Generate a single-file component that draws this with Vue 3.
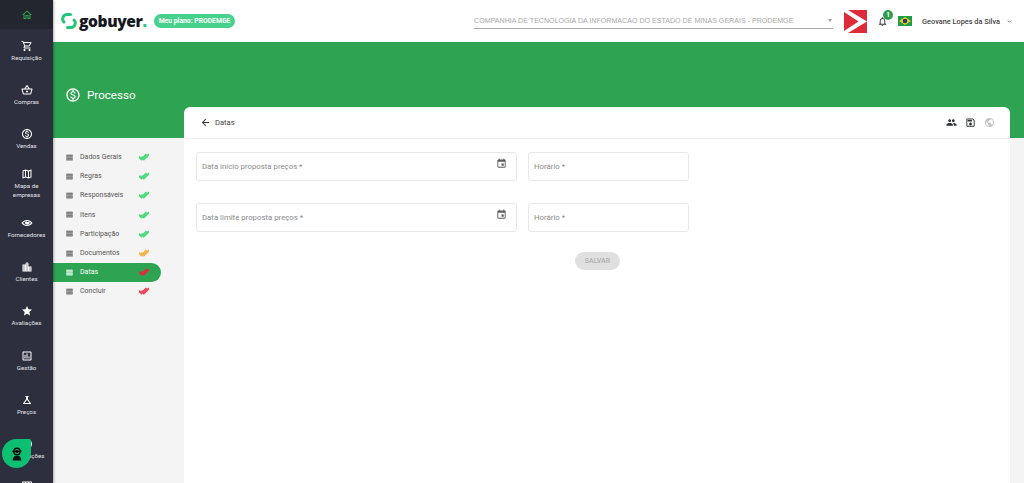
<template>
  <div class="app">
    <!-- sidebar -->
    <aside class="side">
      <div class="side-home">
        <svg class="side-icon home-icon" viewBox="0 0 24 24"><path :d="icons.home" /></svg>
      </div>
      <a v-for="item in menu" :key="item.label" class="side-item">
        <svg class="side-icon" viewBox="0 0 24 24"><path :d="icons[item.icon]" /></svg>
        <span class="side-label">{{ item.label }}</span>
      </a>
      <!-- próximo item, cortado pela janela -->
      <a class="side-item side-item-cut">
        <svg class="side-icon" viewBox="0 0 24 24"><path :d="icons.table" /></svg>
      </a>
    </aside>

    <div class="main">
      <!-- topo -->
      <header class="top">
        <div class="brand">
          <svg class="brand-mark" viewBox="0 0 18 18">
            <path d="M10.5 2.6 H7 A4.3 4.3 0 0 0 4 10" />
            <path d="M7.5 15.4 H11 A4.3 4.3 0 0 0 14 8" />
          </svg>
          <span class="brand-name">gobuyer<i>.</i></span>
        </div>
        <span class="plan">Meu plano: PRODEMGE</span>

        <div class="company">
          <span>COMPANHIA DE TECNOLOGIA DA INFORMACAO DO ESTADO DE MINAS GERAIS - PRODEMGE</span>
          <i class="caret"></i>
        </div>
        <svg class="company-logo" viewBox="0 0 23 23">
          <rect width="23" height="23" fill="#dd2b39" />
          <path d="M0 0 H4 L23 11.5 L4 23 H0 V21 L14.5 11.5 L0 2 Z" fill="#fff" />
        </svg>
        <div class="bell">
          <svg viewBox="0 0 24 24"><path :d="icons.bell" /></svg>
          <span class="badge">1</span>
        </div>
        <svg class="flag" viewBox="0 0 14 10">
          <rect width="14" height="10" fill="#1d9c4a" />
          <path d="M7 1 L12.8 5 L7 9 L1.2 5 Z" fill="#f4d21f" />
          <circle cx="7" cy="5" r="2.3" fill="#27397f" />
        </svg>
        <span class="user">Geovane Lopes da Silva</span>
        <svg class="chev" viewBox="0 0 10 6"><path d="M1.5 1 L5 4.5 L8.5 1" /></svg>
      </header>

      <!-- faixa verde -->
      <section class="hero">
        <svg class="hero-icon" viewBox="0 0 24 24"><path :d="icons.money" /></svg>
        <h1>Processo</h1>
      </section>

      <div class="content">
        <!-- etapas -->
        <nav class="steps">
          <a v-for="s in steps" :key="s.label" class="step" :class="{ active: s.active }">
            <svg class="step-bullet" viewBox="0 0 24 24"><path :d="icons.lines" /></svg>
            <span class="step-label">{{ s.label }}</span>
            <svg class="step-check" viewBox="0 0 24 24"><path :d="icons.doneAll" :fill="s.color" :stroke="s.color" /></svg>
          </a>
        </nav>

        <!-- formulário -->
        <main class="card">
          <div class="card-head">
            <svg class="back" viewBox="0 0 24 24"><path :d="icons.back" /></svg>
            <span class="card-title">Datas</span>
            <div class="card-tools">
              <svg viewBox="0 0 24 24"><path :d="icons.people" /></svg>
              <svg viewBox="0 0 24 24"><path :d="icons.save" /></svg>
              <svg class="muted" viewBox="0 0 24 24"><path :d="icons.globe" /></svg>
            </div>
          </div>

          <form class="form" @submit.prevent>
            <div v-for="row in rows" :key="row" class="form-row">
              <label class="field field-date">
                <span>{{ row }}</span>
                <svg viewBox="0 0 24 24"><path :d="icons.event" /></svg>
              </label>
              <label class="field field-time"><span>Horário *</span></label>
            </div>
            <div class="form-actions">
              <button type="button" class="save-btn">SALVAR</button>
            </div>
          </form>
        </main>
      </div>
    </div>

    <!-- botão de suporte -->
    <button class="fab">
      <svg viewBox="0 0 16 16">
        <circle cx="8" cy="5.5" r="3.2" fill="none" stroke="#111" stroke-width="1.4" />
        <circle cx="8" cy="5.5" r="1.6" fill="#111" />
        <rect x="3.4" y="4.6" width="9.2" height="1.6" rx="0.6" fill="#111" />
        <path d="M3.6 14.4 C3.8 11 5.8 9.8 8 9.8 C10.2 9.8 12.2 11 12.4 14.4 Z" fill="#111" />
      </svg>
    </button>
  </div>
</template>

<script setup>
const icons = {
  home: 'M12 5.69l5 4.5V18h-2v-6H9v6H7v-7.81l5-4.5M12 3L2 12h3v8h6v-6h2v6h6v-8h3L12 3z',
  cart: 'M15.55 13c.75 0 1.41-.41 1.75-1.03l3.58-6.49c.37-.66-.11-1.48-.87-1.48H5.21l-.94-2H1v2h2l3.6 7.59-1.35 2.44C4.52 15.37 5.48 17 7 17h12v-2H7l1.1-2h7.45zM6.16 6h12.15l-2.76 5H8.53L6.16 6zM7 18c-1.1 0-1.99.9-1.99 2S5.9 22 7 22s2-.9 2-2-.9-2-2-2zm10 0c-1.1 0-1.99.9-1.99 2s.89 2 1.99 2 2-.9 2-2-.9-2-2-2z',
  basket: 'M22 9h-4.79l-4.38-6.56c-.19-.28-.51-.42-.83-.42s-.64.14-.83.43L6.79 9H2c-.55 0-1 .45-1 1 0 .09.01.18.04.27l2.54 9.27c.23.84 1 1.46 1.92 1.46h13c.92 0 1.69-.62 1.93-1.46l2.54-9.27L23 10c0-.55-.45-1-1-1zM12 4.8L14.8 9H9.2L12 4.8zM18.5 19l-12.99.01L3.31 11H20.7l-2.2 8zM12 13c-1.1 0-2 .9-2 2s.9 2 2 2 2-.9 2-2-.9-2-2-2z',
  money: 'M12 2C6.48 2 2 6.48 2 12s4.48 10 10 10 10-4.48 10-10S17.52 2 12 2zm0 18c-4.41 0-8-3.59-8-8s3.59-8 8-8 8 3.59 8 8-3.59 8-8 8zm.31-8.86c-1.77-.45-2.34-.94-2.34-1.67 0-.84.79-1.43 2.1-1.43 1.38 0 1.9.66 1.94 1.64h1.71c-.05-1.34-.87-2.57-2.49-2.97V5H10.9v1.69c-1.51.32-2.72 1.3-2.72 2.81 0 1.79 1.49 2.69 3.66 3.21 1.95.46 2.34 1.15 2.34 1.87 0 .53-.39 1.39-2.1 1.39-1.6 0-2.23-.72-2.32-1.64H8.04c.1 1.7 1.36 2.66 2.86 2.97V19h2.34v-1.67c1.52-.29 2.72-1.16 2.73-2.77-.01-2.2-1.9-2.96-3.66-3.42z',
  map: 'M20.5 3l-.16.03L15 5.1 9 3 3.36 4.9c-.21.07-.36.25-.36.48V20.5c0 .28.22.5.5.5l.16-.03L9 18.9l6 2.1 5.64-1.9c.21-.07.36-.25.36-.48V3.5c0-.28-.22-.5-.5-.5zM10 5.47l4 1.4v11.66l-4-1.4V5.47zm-5 .99l3-1.01v11.7l-3 1.16V6.46zm14 11.08l-3 1.01V6.86l3-1.16v11.84z',
  handshake: 'M12 6C7.5 6 3.4 8.2 1 12c2.4 3.8 6.5 6 11 6s8.6-2.2 11-6c-2.4-3.8-6.5-6-11-6zm0 10c-3.1 0-6-1.5-8-4 2-2.5 4.9-4 8-4s6 1.5 8 4c-2 2.5-4.9 4-8 4zM8 10.5l3-1.5 2 1 3-.5 2 2.5-4.5 3.5-3-1-3-2z',
  city: 'M15 11V5l-3-3-3 3v2H3v14h18V11h-6zm-8 8H5v-2h2v2zm0-4H5v-2h2v2zm0-4H5V9h2v2zm6 8h-2v-2h2v2zm0-4h-2v-2h2v2zm0-4h-2V9h2v2zm0-4h-2V5h2v2zm6 12h-2v-2h2v2zm0-4h-2v-2h2v2z',
  star: 'M12 17.27L18.18 21l-1.64-7.03L22 9.24l-7.19-.61L12 2 9.19 8.63 2 9.24l5.46 4.73L5.82 21z',
  chart: 'M19 3H5c-1.1 0-2 .9-2 2v14c0 1.1.9 2 2 2h14c1.1 0 2-.9 2-2V5c0-1.1-.9-2-2-2zm0 16H5V5h14v14zM7 10h2v7H7zm4-3h2v10h-2zm4 6h2v4h-2z',
  flask: 'M19.8 18.4L14 10.67V6.5l1.35-1.69c.26-.33.03-.81-.39-.81H9.04c-.42 0-.65.48-.39.81L10 6.5v4.17L4.2 18.4c-.49.66-.02 1.6.8 1.6h14c.82 0 1.29-.94.8-1.6zM12 7.5l0 0 0 0zM7 18l5-6.5 5 6.5H7z',
  table: 'M20 3H4c-1.1 0-2 .9-2 2v14c0 1.1.9 2 2 2h16c1.1 0 2-.9 2-2V5c0-1.1-.9-2-2-2zM10 5h4v4h-4V5zM4 5h4v4H4V5zm16 4h-4V5h4v4z',
  bell: 'M12 22c1.1 0 2-.9 2-2h-4c0 1.1.9 2 2 2zm6-6v-5c0-3.07-1.63-5.64-4.5-6.32V4c0-.83-.67-1.5-1.5-1.5s-1.5.67-1.5 1.5v.68C7.64 5.36 6 7.92 6 11v5l-2 2v1h16v-1l-2-2zm-2 1H8v-6c0-2.48 1.51-4.5 4-4.5s4 2.02 4 4.5v6z',
  lines: 'M4 15h16v-2H4v2zm0 4h16v-2H4v2zm0-8h16V9H4v2zm0-6v2h16V5H4z',
  doneAll: 'M18 7l-1.41-1.41-6.34 6.34 1.41 1.41L18 7zm4.24-1.41L11.66 16.17 7.48 12l-1.41 1.41L11.66 19l12-12-1.42-1.41zM.41 13.41L6 19l1.41-1.41L1.83 12 .41 13.41z',
  back: 'M20 11H7.83l5.59-5.59L12 4l-8 8 8 8 1.41-1.41L7.83 13H20v-2z',
  people: 'M16 11c1.66 0 2.99-1.34 2.99-3S17.66 5 16 5c-1.66 0-3 1.34-3 3s1.34 3 3 3zm-8 0c1.66 0 2.99-1.34 2.99-3S9.66 5 8 5C6.34 5 5 6.34 5 8s1.34 3 3 3zm0 2c-2.33 0-7 1.17-7 3.5V19h14v-2.5c0-2.33-4.67-3.5-7-3.5zm8 0c-.29 0-.62.02-.97.05 1.16.84 1.97 1.97 1.97 3.45V19h6v-2.5c0-2.33-4.67-3.5-7-3.5z',
  save: 'M17 3H5c-1.11 0-2 .9-2 2v14c0 1.1.89 2 2 2h14c1.1 0 2-.9 2-2V7l-4-4zm2 16H5V5h11.17L19 7.83V19zm-7-7c-1.66 0-3 1.34-3 3s1.34 3 3 3 3-1.34 3-3-1.34-3-3-3zM6 6h9v4H6z',
  globe: 'M12 2C6.48 2 2 6.48 2 12s4.48 10 10 10 10-4.48 10-10S17.52 2 12 2zm-1 17.93c-3.95-.49-7-3.85-7-7.93 0-.62.08-1.21.21-1.79L9 15v1c0 1.1.9 2 2 2v1.93zm6.9-2.54c-.26-.81-1-1.39-1.9-1.39h-1v-3c0-.55-.45-1-1-1H8v-2h2c.55 0 1-.45 1-1V7h2c1.1 0 2-.9 2-2v-.41c2.93 1.19 5 4.06 5 7.41 0 2.08-.8 3.97-2.1 5.39z',
  event: 'M17 12h-5v5h5v-5zM16 1v2H8V1H6v2H5c-1.11 0-1.99.9-1.99 2L3 19c0 1.1.89 2 2 2h14c1.1 0 2-.9 2-2V5c0-1.1-.9-2-2-2h-1V1h-2zm3 18H5V8h14v11z',
}

const menu = [
  { label: 'Requisição', icon: 'cart' },
  { label: 'Compras', icon: 'basket' },
  { label: 'Vendas', icon: 'money' },
  { label: 'Mapa de empresas', icon: 'map' },
  { label: 'Fornecedores', icon: 'handshake' },
  { label: 'Clientes', icon: 'city' },
  { label: 'Avaliações', icon: 'star' },
  { label: 'Gestão', icon: 'chart' },
  { label: 'Preços', icon: 'flask' },
  { label: 'Negociações', icon: 'money' },
]

const green = '#4fdc7c'
const steps = [
  { label: 'Dados Gerais', color: green },
  { label: 'Regras', color: green },
  { label: 'Responsáveis', color: green },
  { label: 'Itens', color: green },
  { label: 'Participação', color: green },
  { label: 'Documentos', color: '#f3b54a' },
  { label: 'Datas', color: '#d9303c', active: true },
  { label: 'Concluir', color: '#f4465a' },
]

const rows = ['Data início proposta preços *', 'Data limite proposta preços *']
</script>

<style>
html, body {
  margin: 0;
  height: 100%;
  overflow: hidden;
  background: #f4f4f4;
}
</style>

<style scoped>
.app {
  display: flex;
  height: 100vh;
  overflow: hidden;
  font-family: Roboto, "Liberation Sans", sans-serif;
  position: relative;
}

/* ── sidebar ── */
.side {
  width: 53px;
  flex-shrink: 0;
  background: #2d2f3e;
  box-shadow: 1px 0 2px rgba(0, 0, 0, 0.3);
  display: flex;
  flex-direction: column;
  overflow: hidden;
  z-index: 2;
}
.side-home {
  height: 29px;
  flex-shrink: 0;
  background: #23252f;
  display: flex;
  align-items: center;
  justify-content: center;
}
.side-item {
  height: 44.3px;
  flex-shrink: 0;
  display: flex;
  flex-direction: column;
  align-items: center;
  justify-content: center;
  gap: 2px;
}
.side-item-cut {
  justify-content: flex-start;
  padding-top: 8px;
  box-sizing: border-box;
}
.side-icon {
  width: 12px;
  height: 12px;
  fill: #fff;
}
.home-icon {
  fill: #2fa651;
}
.side-label {
  font-size: 6.2px;
  line-height: 9px;
  font-weight: 400;
  color: #e2e3e8;
  text-align: center;
  max-width: 44px;
}

/* ── topo ── */
.main {
  flex: 1;
  min-width: 0;
  display: flex;
  flex-direction: column;
}
.top {
  height: 42px;
  flex-shrink: 0;
  background: #fff;
  display: flex;
  align-items: center;
  padding: 0 12px 0 7px;
}
.brand {
  display: flex;
  align-items: center;
  gap: 1px;
}
.brand-mark {
  width: 18px;
  height: 18px;
  fill: none;
  stroke: #21c77a;
  stroke-width: 3;
  stroke-linecap: round;
}
.brand-name {
  font-family: "Open Sans", sans-serif;
  font-size: 15.6px;
  font-weight: 800;
  letter-spacing: -0.4px;
  color: #16181d;
}
.brand-name i {
  font-style: normal;
  color: #21c77a;
}
.plan {
  margin-left: 7px;
  height: 14px;
  padding: 0 5px;
  border-radius: 7px;
  background: #46d18c;
  color: #fff;
  font-size: 6.8px;
  font-weight: 700;
  line-height: 14px;
  white-space: nowrap;
}
.company {
  margin-left: auto;
  margin-bottom: 4px;
  width: 359px;
  height: 20px;
  box-sizing: border-box;
  padding: 4px 1px 0 0;
  border-bottom: 1px solid #a9a9a9;
  display: flex;
  align-items: center;
  justify-content: space-between;
  font-family: "Liberation Sans", sans-serif;
  font-size: 7.1px;
  color: #a8a8a8;
  white-space: nowrap;
}
.caret {
  width: 0;
  height: 0;
  border-left: 2.5px solid transparent;
  border-right: 2.5px solid transparent;
  border-top: 3px solid #999;
}
.company-logo {
  width: 23px;
  height: 23px;
  margin-left: 11px;
  flex-shrink: 0;
}
.bell {
  position: relative;
  width: 11px;
  height: 11px;
  margin-left: 10px;
}
.bell svg {
  width: 11px;
  height: 11px;
  fill: #333;
  display: block;
}
.badge {
  position: absolute;
  top: -6px;
  left: 6px;
  width: 10px;
  height: 10px;
  border-radius: 50%;
  background: #2e9d4f;
  color: #fff;
  font-size: 6.5px;
  font-weight: 700;
  line-height: 10px;
  text-align: center;
}
.flag {
  width: 14px;
  height: 10px;
  margin-left: 10px;
  flex-shrink: 0;
}
.user {
  margin-left: 10px;
  font-size: 7.35px;
  font-weight: 500;
  color: #444;
  white-space: nowrap;
}
.chev {
  width: 5px;
  height: 3px;
  margin-left: 7px;
  fill: none;
  stroke: #555;
  stroke-width: 1.4;
}

/* ── faixa verde ── */
.hero {
  height: 96px;
  flex-shrink: 0;
  background: #2ea452;
  display: flex;
  align-items: center;
  padding: 10px 0 0 12px;
  box-sizing: border-box;
  color: #fff;
}
.hero-icon {
  width: 16px;
  height: 16px;
  fill: #fff;
}
.hero h1 {
  margin: 0 0 0 6px;
  font-size: 11.6px;
  font-weight: 400;
  line-height: 16px;
}

/* ── conteúdo ── */
.content {
  flex: 1;
  min-height: 0;
  display: flex;
  background: #f4f4f4;
  padding-right: 14px;
}
.steps {
  width: 131px;
  flex-shrink: 0;
  padding-top: 9.5px;
  display: flex;
  flex-direction: column;
  box-sizing: border-box;
}
.step {
  width: 108px;
  height: 19.2px;
  flex-shrink: 0;
  display: flex;
  align-items: center;
  box-sizing: border-box;
  padding-left: 11.5px;
  border-radius: 0 10px 10px 0;
  color: #555;
  font-size: 7px;
}
.step.active {
  background: #2ea452;
  color: #fff;
}
.step-bullet {
  width: 9px;
  height: 9px;
  fill: #777;
  stroke: #777;
  stroke-width: 1.6;
}
.step.active .step-bullet {
  fill: #d8efdf;
  stroke: #d8efdf;
}
.step-label {
  margin-left: 6.5px;
  width: 59px;
  white-space: nowrap;
}
.step-check {
  width: 10px;
  height: 10px;
  stroke-width: 3;
}

.card {
  flex: 1;
  min-width: 0;
  margin-top: -31px;
  background: #fff;
  border-radius: 6px 6px 0 0;
  position: relative;
}
.card-head {
  height: 32px;
  box-sizing: border-box;
  border-bottom: 1px solid #eee;
  display: flex;
  align-items: center;
  padding: 0 15px 0 16px;
}
.back {
  width: 11px;
  height: 11px;
  fill: #333;
}
.card-title {
  margin-left: 4px;
  font-size: 7.6px;
  color: #444;
}
.card-tools {
  margin-left: auto;
  display: flex;
  gap: 8px;
}
.card-tools svg {
  width: 11px;
  height: 11px;
  fill: #2e3038;
}
.card-tools svg.muted {
  fill: #c4c4c4;
}
.form {
  padding: 13px 11px 0 12px;
}
.form-row {
  display: flex;
  gap: 11px;
  margin-bottom: 22px;
}
.field {
  height: 29px;
  box-sizing: border-box;
  border: 1px solid #e8e8e8;
  border-radius: 3px;
  display: flex;
  align-items: center;
  justify-content: space-between;
  padding: 0 5px;
  font-size: 7.8px;
  color: #8a8a8a;
}
.field-date {
  width: 321px;
}
.field-date svg {
  width: 11px;
  height: 11px;
  fill: #5d5d5d;
  align-self: flex-start;
  margin: 5px 4px 0 0;
}
.field-time {
  width: 161px;
}
.form-actions {
  display: flex;
  justify-content: center;
  margin-top: -2px;
}
.save-btn {
  width: 45px;
  height: 18px;
  border: 0;
  border-radius: 9px;
  padding: 0;
  background: #e0e0e0;
  color: #adadad;
  font-family: inherit;
  font-size: 7px;
  font-weight: 500;
}

/* ── botão flutuante ── */
.fab {
  position: absolute;
  left: 2px;
  top: 439px;
  width: 29px;
  height: 29px;
  border: 0;
  padding: 6.5px;
  background: #0dbf70;
  border-radius: 50% 2px 50% 50%;
  z-index: 3;
}
.fab svg {
  width: 16px;
  height: 16px;
  display: block;
}
</style>
